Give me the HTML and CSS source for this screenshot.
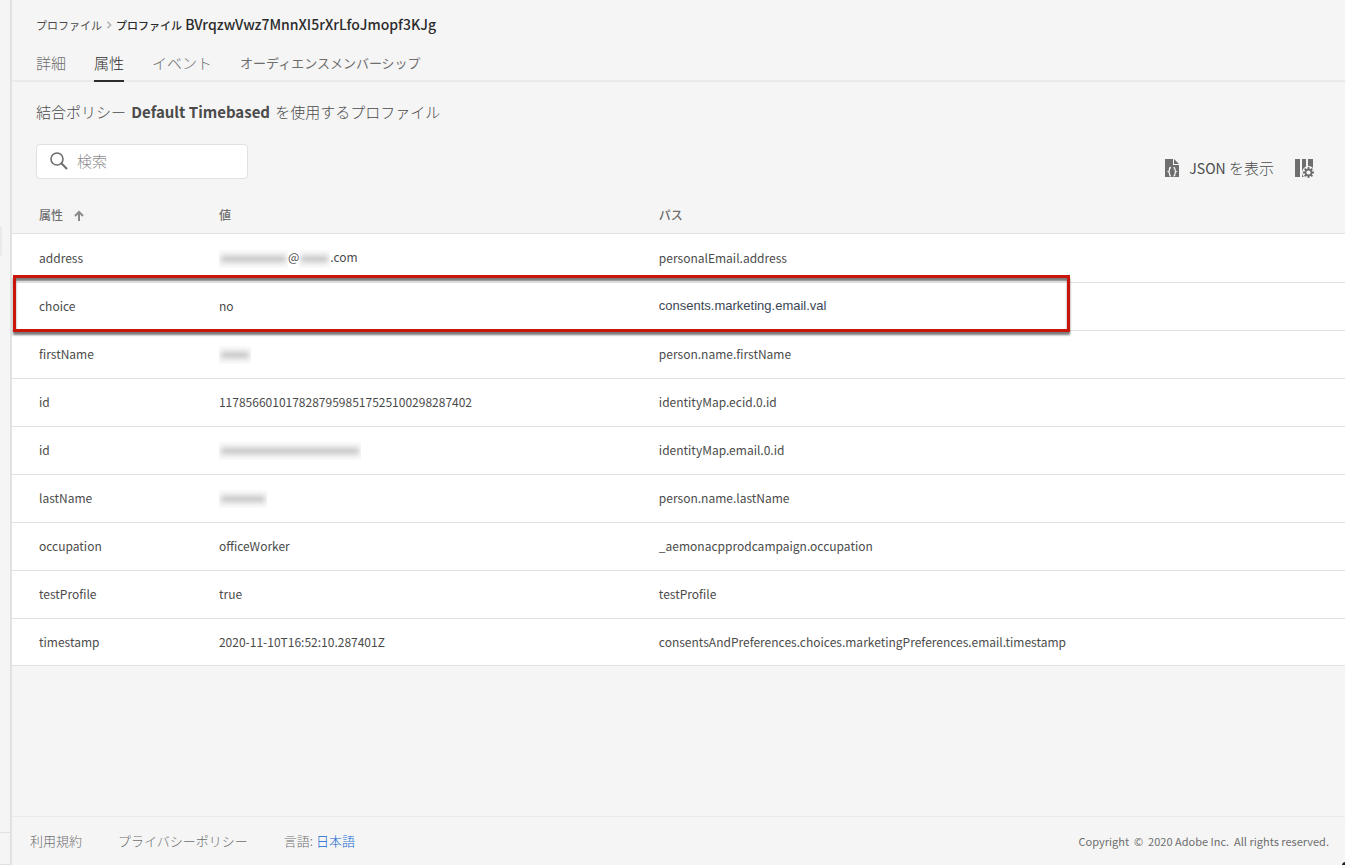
FILE: index.html
```html
<!DOCTYPE html>
<html lang="ja">
<head>
  <meta charset="UTF-8">
  <meta name="viewport" content="width=device-width, initial-scale=1.0">
  <title>プロファイル</title>
  <link rel="stylesheet" href="styles.css">
</head>
<body>
  <div class="app">
    <aside class="rail">
      <span class="rail-handle"></span>
      <span class="rail-footer"></span>
    </aside>

    <div class="page">
      <header class="page-header">
        <nav class="breadcrumb">
          <a href="#">プロファイル</a>
          <svg class="chevron" viewBox="0 0 6 10" aria-hidden="true"><path d="M1 1l4 4-4 4" fill="none" stroke="#b3b3b3" stroke-width="2"/></svg>
          <h1><span>プロファイル</span> BVrqzwVwz7MnnXI5rXrLfoJmopf3KJg</h1>
        </nav>
        <nav class="tabs">
          <a href="#">詳細</a>
          <a href="#" class="active">属性</a>
          <a href="#">イベント</a>
          <a href="#" class="tab-small">オーディエンスメンバーシップ</a>
        </nav>
      </header>

      <main>
        <p class="policy">結合ポリシー <strong>Default Timebased</strong> を使用するプロファイル</p>

        <div class="toolbar">
          <label class="search">
            <svg viewBox="0 0 18 18" aria-hidden="true"><circle cx="7" cy="7" r="6" fill="none" stroke="#6e6e6e" stroke-width="1.600"/><path d="M11.300 11.300L17 17" stroke="#6e6e6e" stroke-width="2"/></svg>
            <input type="search" placeholder="検索" aria-label="検索">
          </label>
          <div class="actions">
            <button type="button" class="json-button">
              <svg viewBox="0 0 14 18" aria-hidden="true">
                <path d="M0 0h8v6h6v12H0z" fill="#6e6e6e"/>
                <path d="M9 0l5 5H9z" fill="#6e6e6e"/>
                <path d="M6 8.500c-1.500 0-1.500.7-1.500 2s0 1.800-1 2.200c1 .4 1 1 1 2.300s0 2 1.500 2M8.500 8.500c1.500 0 1.500.7 1.500 2s0 1.800 1 2.200c-1 .4-1 1-1 2.300s0 2-1.500 2" fill="none" stroke="#f5f5f5" stroke-width="1.300"/>
              </svg>
              <span><span class="latin">JSON</span> を表示</span>
            </button>
            <button type="button" class="columns-button" aria-label="列の設定">
              <svg viewBox="0 0 20 20" aria-hidden="true">
                <path d="M1 1h5v18H1zM8 1h4v18H8zM14 1h5v9h-5z" fill="#6e6e6e"/>
                <circle cx="14.500" cy="14.500" r="6.500" fill="#f5f5f5"/>
                <path d="M14.500 9v11M9 14.500h11M10.600 10.600l7.800 7.800M18.400 10.600l-7.800 7.800" stroke="#6e6e6e" stroke-width="1.800"/>
                <circle cx="14.500" cy="14.500" r="3" fill="#f5f5f5" stroke="#6e6e6e" stroke-width="1.800"/>
              </svg>
            </button>
          </div>
        </div>

        <table class="attributes">
          <thead>
            <tr>
              <th class="col-name">属性
                <svg class="sort" viewBox="0 0 10 11" aria-hidden="true"><path d="M5 11V2M1 6l4-4 4 4" fill="none" stroke="#8a8a8a" stroke-width="2"/></svg>
              </th>
              <th class="col-value">値</th>
              <th>パス</th>
            </tr>
          </thead>
          <tbody>
            <tr>
              <td>address</td>
              <td><span class="masked mask-user"></span>@<span class="masked mask-host"></span>.com</td>
              <td>personalEmail.address</td>
            </tr>
            <tr class="highlighted">
              <td>choice<span class="highlight-box"></span></td>
              <td>no</td>
              <td class="consent-path">consents.marketing.email.val</td>
            </tr>
            <tr>
              <td>firstName</td>
              <td><span class="masked mask-first"></span></td>
              <td>person.name.firstName</td>
            </tr>
            <tr>
              <td>id</td>
              <td>11785660101782879598517525100298287402</td>
              <td>identityMap.ecid.0.id</td>
            </tr>
            <tr>
              <td>id</td>
              <td><span class="masked mask-email"></span></td>
              <td>identityMap.email.0.id</td>
            </tr>
            <tr>
              <td>lastName</td>
              <td><span class="masked mask-last"></span></td>
              <td>person.name.lastName</td>
            </tr>
            <tr>
              <td>occupation</td>
              <td>officeWorker</td>
              <td>_aemonacpprodcampaign.occupation</td>
            </tr>
            <tr>
              <td>testProfile</td>
              <td>true</td>
              <td>testProfile</td>
            </tr>
            <tr>
              <td>timestamp</td>
              <td>2020-11-10T16:52:10.287401Z</td>
              <td>consentsAndPreferences.choices.marketingPreferences.email.timestamp</td>
            </tr>
          </tbody>
        </table>
      </main>

      <footer class="page-footer">
        <a href="#">利用規約</a>
        <a href="#">プライバシーポリシー</a>
        <span class="language">言語: <a href="#">日本語</a></span>
        <small>Copyright &nbsp;© &nbsp;2020 Adobe Inc. &nbsp;All rights reserved.</small>
      </footer>
    </div>
  </div>
  <span class="corner"></span>
</body>
</html>
```
FILE: styles.css
```css
* {
  box-sizing: border-box;
}

body {
  margin: 0;
  background: #f5f5f5;
  color: #4b4b4b;
  font-family: "Noto Sans CJK JP", "Noto Sans", sans-serif;
  font-size: 12px;
  line-height: 20px;
}

a {
  color: inherit;
  text-decoration: none;
}

button {
  display: flex;
  align-items: center;
  padding: 0;
  border: 0;
  background: none;
  color: inherit;
  font: inherit;
  cursor: pointer;
}

.app {
  display: flex;
  min-height: 100vh;
}

/* Left rail */
.rail {
  display: flex;
  flex-direction: column;
  justify-content: space-between;
  flex: none;
  width: 12px;
  padding-top: 226px;
  border-right: 2px solid #e1e1e1;
  border-bottom: 1px solid #e1e1e1;
}

.rail-handle {
  width: 2px;
  height: 30px;
  border-radius: 0 2px 2px 0;
  background: #eaeaea;
}

.rail-footer {
  height: 32px;
  border-top: 1px solid #e1e1e1;
}

.page {
  display: flex;
  flex-direction: column;
  flex: 1;
  min-width: 0;
}

main {
  flex: 1;
}

/* Header */
.page-header {
  padding: 14px 24px 0;
  border-bottom: 2px solid #eaeaea;
}

.breadcrumb {
  display: flex;
  align-items: center;
  gap: 4px;
}

.breadcrumb > a {
  font-size: 11px;
}

.chevron {
  width: 6px;
  height: 8px;
}

.breadcrumb h1 {
  margin: 0;
  color: #2c2c2c;
  font-size: 14px;
  font-weight: 500;
  line-height: 20px;
}

.breadcrumb h1 span {
  font-size: 11px;
}

.tabs {
  display: flex;
  gap: 28px;
  margin-top: 14px;
  margin-bottom: -2px;
  color: #6e6e6e;
  font-size: 15px;
  font-weight: 300;
  line-height: 28px;
}

.tabs a {
  padding-bottom: 3px;
  border-bottom: 2px solid transparent;
}

.tabs .active {
  border-color: #2c2c2c;
  color: #2c2c2c;
}

.tabs .tab-small {
  font-size: 13px;
  font-weight: 400;
}

.policy {
  margin: 20px 24px 22px;
  font-size: 15px;
  font-weight: 300;
}

.policy strong {
  margin: 0 2px;
  font-weight: 700;
}

/* Search and actions */
.toolbar {
  display: flex;
  justify-content: space-between;
  align-items: flex-start;
  padding: 0 31px 0 24px;
}

.search {
  display: flex;
  align-items: center;
  gap: 9px;
  width: 212px;
  height: 35px;
  padding: 0 13px 2px;
  border: 1px solid #e1e1e1;
  border-radius: 4px;
  background: #fff;
}

.search svg {
  flex: none;
  width: 18px;
  height: 18px;
}

.search input {
  flex: 1;
  min-width: 0;
  padding: 0;
  border: 0;
  outline: 0;
  background: none;
  font: inherit;
  font-size: 15px;
  font-weight: 300;
}

.search input::placeholder {
  color: #8a8a8a;
}

.actions {
  display: flex;
  gap: 20px;
  padding-top: 14px;
}

.json-button {
  gap: 10px;
  font-size: 15px;
  font-weight: 300;
}

.json-button .latin {
  font-size: 14px;
  font-weight: 400;
}

.json-button svg {
  width: 14px;
  height: 18px;
}

.columns-button svg {
  width: 20px;
  height: 20px;
}

/* Attribute table */
.attributes {
  width: 100%;
  margin-top: 18px;
  border-collapse: separate;
  border-spacing: 0;
  table-layout: fixed;
}

.col-name {
  width: 13.5%;
}

.col-value {
  width: 33%;
}

.attributes th {
  height: 37px;
  padding: 0 0 0 27px;
  border-bottom: 1px solid #e1e1e1;
  color: #6e6e6e;
  font-size: 12px;
  font-weight: 500;
  text-align: left;
}

.sort {
  width: 10px;
  height: 11px;
  margin-left: 8px;
  vertical-align: -1px;
}

.attributes td {
  height: 48px;
  padding: 0 0 1px 27px;
  border-bottom: 1px solid #e1e1e1;
  background: #fff;
  white-space: nowrap;
}

.attributes tbody tr:first-child td {
  height: 49px;
}

.attributes tbody tr:last-child td {
  height: 47px;
}

.attributes .consent-path {
  color: #3b4754;
  font-family: "Liberation Sans", Arial, sans-serif;
  font-size: 13px;
}

.highlighted {
  position: relative;
}

.highlight-box {
  position: absolute;
  z-index: 1;
  top: -8px;
  left: 1px;
  width: 79.3%;
  height: 57px;
  border: 3px solid #c9160b;
  box-shadow: 0 3px 2px #7a7a7a, inset 0 3px 2px #7a7a7a;
  pointer-events: none;
}

/* Redacted values */
.masked {
  display: inline-block;
  height: 18px;
  background: #f7f7f7;
  box-shadow: inset 0 0 5px 2px #fafafa;
  background-image: linear-gradient(#fafafa, #cecece 50%, #fafafa);
  vertical-align: middle;
}

.mask-user {
  width: 69px;
}

.mask-host {
  width: 31px;
}

.mask-first {
  width: 32px;
}

.mask-email {
  width: 142px;
}

.mask-last {
  width: 48px;
}

/* Footer */
.page-footer {
  display: flex;
  align-items: center;
  gap: 36px;
  height: 49px;
  padding: 0 16px 1px 18px;
  border-top: 1px solid #eaeaea;
  color: #6e6e6e;
  font-size: 13px;
  font-weight: 300;
}

.language a {
  color: #0d66d0;
}

.page-footer small {
  margin-left: auto;
  font-size: 11px;
  font-weight: 400;
}

.corner {
  position: fixed;
  right: -4px;
  bottom: -4px;
  width: 7px;
  height: 7px;
  border-radius: 50%;
  background: #2b1718;
}
```
